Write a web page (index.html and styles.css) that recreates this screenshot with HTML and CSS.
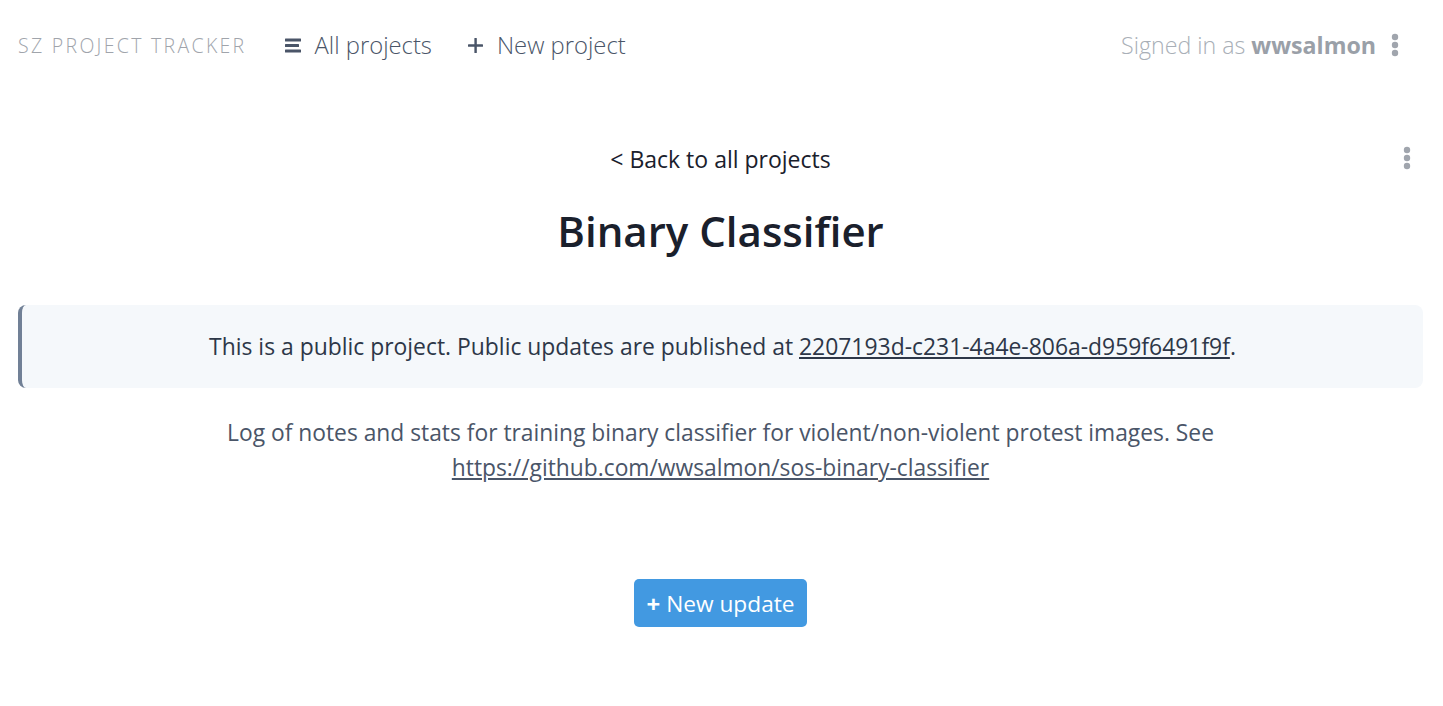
FILE: index.html
```html
<!DOCTYPE html>
<html>
<head>
<meta charset="utf-8">
<link rel="stylesheet" href="styles.css">
</head>
<body>
<header class="topbar">
  <div class="nav-left">
    <span class="brand">SZ Project Tracker</span>
    <a class="nav-link" href="#">
      <svg class="nav-icon" viewBox="0 0 16 15" width="16" height="15"><rect x="0" y="0.5" width="16" height="3" rx="0.5"/><rect x="0" y="6" width="14" height="3" rx="0.5"/><rect x="0" y="11.5" width="16" height="3" rx="0.5"/></svg>
      <span>All projects</span>
    </a>
    <a class="nav-link" href="#">
      <svg class="nav-icon" viewBox="0 0 16 16" width="15" height="15"><rect x="6.8" y="0" width="2.6" height="16" rx="0.6"/><rect x="0" y="6.7" width="16" height="2.6" rx="0.6"/></svg>
      <span>New project</span>
    </a>
  </div>
  <div class="nav-right">
    <span class="signed">Signed in as <b>wwsalmon</b></span>
    <svg class="kebab" viewBox="0 0 8 24" width="8" height="24"><circle cx="4" cy="4" r="3.2"/><circle cx="4" cy="12" r="3.2"/><circle cx="4" cy="20" r="3.2"/></svg>
  </div>
</header>
<main class="content">
  <div class="back-row">
    <a class="back" href="#">&lt; Back to all projects</a>
    <svg class="kebab page-kebab" viewBox="0 0 8 24" width="8" height="24"><circle cx="4" cy="4" r="3.2"/><circle cx="4" cy="12" r="3.2"/><circle cx="4" cy="20" r="3.2"/></svg>
  </div>
  <h1 class="title">Binary Classifier</h1>
  <div class="notice"><span>This is a public project. Public updates are published at <a href="#">2207193d-c231-4a4e-806a-d959f6491f9f</a>.</span></div>
  <p class="desc">Log of notes and stats for training binary classifier for violent/non-violent protest images. See <a href="#">https://github.com/wwsalmon/sos-binary-classifier</a></p>
  <div class="actions">
    <button class="btn"><span class="plus">+</span>New update</button>
  </div>
</main>
</body>
</html>
```
FILE: styles.css
```css
* { box-sizing: border-box; }
body {
  margin: 0;
  font-family: "Open Sans", "Noto Sans", sans-serif;
  background: #fff;
  color: #1a202c;
}
a { color: inherit; }
.topbar {
  height: 90px;
  display: flex;
  align-items: center;
  justify-content: space-between;
  padding: 0 44px 0 18px;
}
.nav-left { display: flex; align-items: center; }
.brand {
  font-size: 19.5px;
  letter-spacing: 2.3px;
  text-transform: uppercase;
  color: #a0a4ab;
  font-weight: 300;
  margin-right: 38px;
}
.nav-link {
  display: flex;
  align-items: center;
  font-size: 23.8px;
  font-weight: 300;
  color: #4a5568;
  text-decoration: none;
  margin-right: 36px;
}
.nav-icon { fill: #4a5568; margin-right: 14px; }
.nav-right { display: flex; align-items: center; }
.signed { font-size: 23.2px; font-weight: 300; color: #a9afb7; }
.signed b { font-weight: 700; color: #9aa0a8; }
.kebab { fill: #a0a5ad; }
.nav-right .kebab { margin-left: 15px; }
.content { padding: 0 20px 0 18px; }
.back-row {
  position: relative;
  display: flex;
  justify-content: center;
  padding-top: 53px;
}
.back {
  font-size: 23px;
  font-weight: 500;
  text-decoration: none;
  color: #1a202c;
}
.page-kebab { position: absolute; right: 12px; top: 56px; }
.title {
  text-align: center;
  font-size: 42px;
  font-weight: 600;
  margin: 27px 0 46px;
  color: #1a202c;
}
.notice {
  background: #f5f8fb;
  border-left: 4px solid #718096;
  border-radius: 8px;
  height: 83px;
  display: flex;
  align-items: center;
  justify-content: center;
  font-size: 22.9px;
  color: #2d3748;
}
.desc {
  text-align: center;
  font-size: 22.8px;
  line-height: 35px;
  color: #4a5568;
  margin: 27px 180px 0;
}
.actions {
  display: flex;
  justify-content: center;
  margin-top: 94px;
}
.btn {
  background: #4299e1;
  color: #fff;
  border: none;
  border-radius: 5px;
  height: 48px;
  padding: 0 12px;
  font-family: inherit;
  font-size: 22.7px;
  display: flex;
  align-items: center;
}
.btn .plus { font-weight: 700; margin-right: 6px; font-size: 24px; }
```
